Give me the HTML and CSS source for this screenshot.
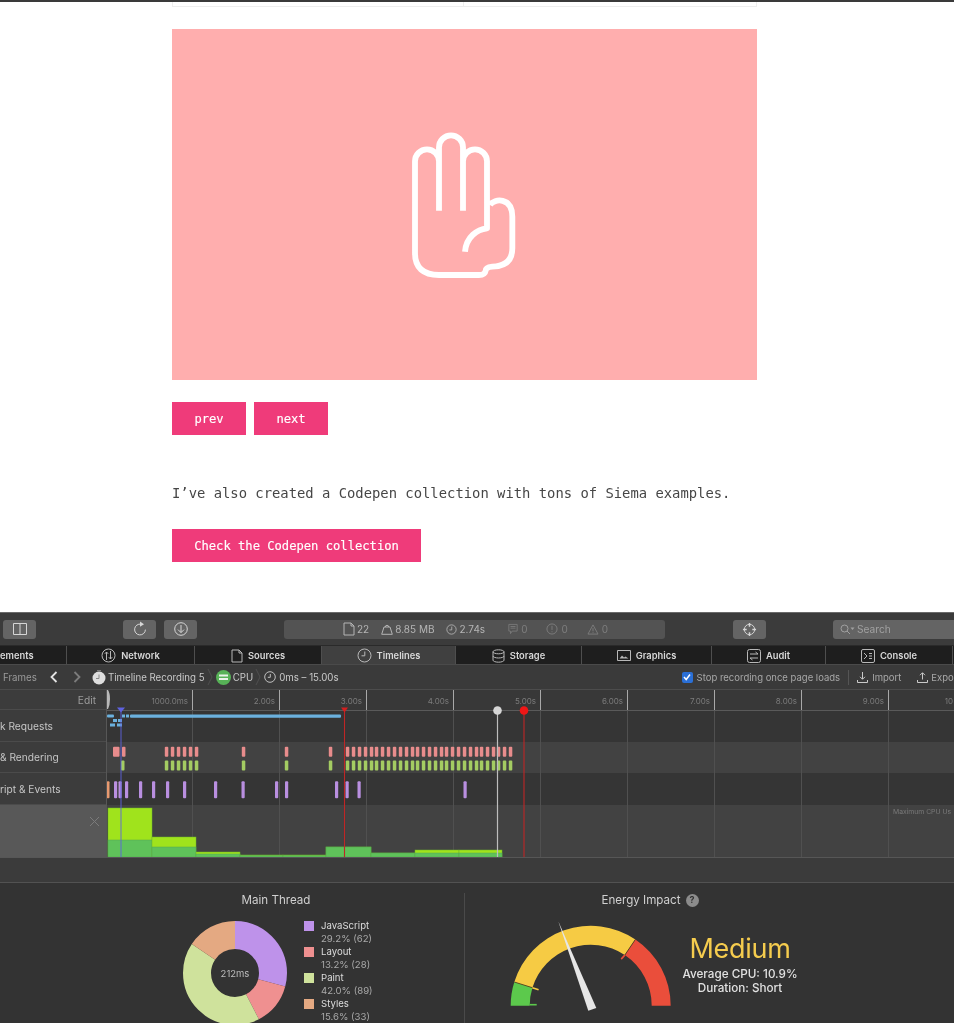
FILE: index.html
```html
<!DOCTYPE html>
<html lang="en">
<head>
<meta charset="utf-8">
<title>Siema</title>
<link rel="stylesheet" href="styles.css">
</head>
<body>
<div class="topline"></div>
<main class="article">
  <div class="table-stub"><span></span><span></span></div>
  <div class="slide">
    <svg class="hand" viewBox="0 0 450 510" width="150" height="170">
      <path d="M78 124a36 36 0 0 1 72 0V272M150 124V82a36 36 0 0 1 72 0V272M222 124a36 36 0 0 1 72 0V325C265 328 232 350 228 395M303 255C315 235 370 230 370 290V385Q370 438 310 440Q290 442 290 452Q288 465 270 465H150Q78 465 78 400V124"/>
    </svg>
  </div>
  <div class="pager">
    <a class="btn btn-small">prev</a>
    <a class="btn btn-small">next</a>
  </div>
  <p class="copy">I’ve also created a Codepen collection with tons of Siema examples.</p>
  <a class="btn btn-wide">Check the Codepen collection</a>
</main>

<section class="devtools">
  <div class="toolbar">
    <div class="tool tool-dock"><svg width="14" height="12" viewBox="0 0 14 12"><path class="ic" d="M.5.5h13v11H.5zM7 .5v11"/></svg></div>
    <div class="tool tool-reload"><svg width="16" height="16" viewBox="0 0 16 16"><path class="ic" d="M9 3.2A5.4 5.4 0 1 0 13.4 8.600"/><path class="ic-fill" d="M8 .6l4 2.6-4 2.600z"/></svg></div>
    <div class="tool tool-save"><svg width="16" height="16" viewBox="0 0 16 16"><circle class="ic" cx="8" cy="8" r="6.300"/><path class="ic" d="M8 4v7.500M5 8.600l3 3 3-3"/></svg></div>
    <div class="status">
      <span class="stat"><svg width="12" height="14" viewBox="0 0 12 14"><path class="ic" d="M1 1h7l3 3v9H1zM8 1v3h3"/></svg>22</span>
      <span class="stat"><svg width="12" height="12" viewBox="0 0 12 12"><path class="ic" d="M.7 11.300h10.600L9 4H3zM4.300 4a1.700 1.700 0 1 1 3.400 0"/></svg>8.85 MB</span>
      <span class="stat"><svg width="11" height="11" viewBox="0 0 13 13"><circle class="ic" cx="6.500" cy="6.500" r="5.500"/><path class="ic" d="M6.800 3v4H4"/></svg>2.74s</span>
      <span class="stat stat-dim stat-dim-first"><svg width="10" height="12" viewBox="0 0 12 13"><path class="ic" d="M1 1h10v8H5l-2 3V9H1zM3 3.500h6M3 5.500h6"/></svg>0</span>
      <span class="stat stat-dim"><svg width="12" height="12" viewBox="0 0 13 13"><circle class="ic" cx="6.500" cy="6.500" r="5.500"/><path class="ic" d="M6.500 3v4.500M6.500 9v1"/></svg>0</span>
      <span class="stat stat-dim"><svg width="12" height="11" viewBox="0 0 13 12"><path class="ic" d="M6.500 1L12 11H1zM6.500 4.500v3.500M6.500 9v1"/></svg>0</span>
    </div>
    <div class="tool tool-target"><svg width="15" height="15" viewBox="0 0 16 16"><circle class="ic" cx="8" cy="8" r="5.500"/><path class="ic-strong" d="M8 1v4M8 11v4M1 8h4M11 8h4"/></svg></div>
    <div class="search"><svg width="15" height="11" viewBox="0 0 15 11"><circle class="ic" cx="4.500" cy="4.500" r="3.500"/><path class="ic" d="M7 7l3 3"/><path class="ic-fill" d="M10.500 3.500h4l-2 2.500z"/></svg>Search</div>
  </div>

  <nav class="tabs">
    <div class="tab tab-first">ements</div>
    <div class="tab tab-net"><svg width="15" height="15" viewBox="0 0 15 15"><circle class="ic" cx="7.500" cy="7.500" r="6.500"/><path class="ic" d="M5.500 12V4M3.800 5.800l1.700-1.800 1.700 1.800M9.500 3v8M7.800 9.200l1.700 1.800 1.700-1.800"/></svg>Network</div>
    <div class="tab tab-src"><svg width="12" height="14" viewBox="0 0 12 14"><path class="ic" d="M1 1h7l3 3v9H1zM8 1v3h3"/></svg>Sources</div>
    <div class="tab tab-time tab-active"><svg width="15" height="15" viewBox="0 0 15 15"><circle class="ic" cx="7.500" cy="7.500" r="6.500"/><path class="ic" d="M7.800 3.500v4.300H4.500"/></svg>Timelines</div>
    <div class="tab tab-store"><svg width="13" height="14" viewBox="0 0 13 14"><ellipse class="ic" cx="6.500" cy="2.800" rx="5.500" ry="2"/><path class="ic" d="M1 2.800v8.400c0 1.100 2.500 2 5.500 2s5.500-.9 5.500-2V2.800M1 7c0 1.100 2.500 2 5.500 2S12 8.100 12 7"/></svg>Storage</div>
    <div class="tab tab-gfx"><svg width="14" height="11" viewBox="0 0 14 11"><path class="ic" d="M.5.500h13v10H.5z"/><path class="ic-fill" d="M2.500 8.500l2.500-3 2 2 1.500-1 3 2z"/></svg>Graphics</div>
    <div class="tab tab-audit"><svg width="14" height="14" viewBox="0 0 14 14"><rect class="ic" x=".5" y=".5" width="13" height="13" rx="2"/><path class="ic" d="M3 5h8M8.500 3l2.500 2M11 9H3M5.500 11L3 9"/></svg>Audit</div>
    <div class="tab tab-cons"><svg width="14" height="14" viewBox="0 0 14 14"><rect class="ic" x=".5" y=".5" width="13" height="13" rx="1.500"/><path class="ic" d="M3 4l3 3-3 3M8 4.500h3M8 7h3M8 9.500h3"/></svg>Console</div>
    <div class="tab tab-last"></div>
  </nav>

  <div class="navbar">
    <span class="nav-frames">Frames</span>
    <svg class="nav-back" width="8" height="12" viewBox="0 0 8 12"><path class="chev-on" d="M6.500 1L1.500 6l5 5"/></svg>
    <svg class="nav-fwd" width="8" height="12" viewBox="0 0 8 12"><path class="chev-off" d="M1.500 1l5 5-5 5"/></svg>
    <svg class="nav-watch" width="14" height="15" viewBox="0 0 14 15"><circle class="watch" cx="7" cy="8" r="6.500"/><path class="watch-hand" d="M7 4.500V8.500H4M5 .7h4"/></svg>
    <span class="crumb">Timeline Recording 5</span>
    <svg class="sep" width="6" height="18" viewBox="0 0 6 18"><path class="crumb-sep" d="M1 1l4 8-4 8"/></svg>
    <svg class="nav-cpu" width="15" height="15" viewBox="0 0 15 15"><circle class="cpu-dot" cx="7.500" cy="7.500" r="7.500"/><rect class="cpu-bar" x="3" y="4.500" width="9" height="2"/><rect class="cpu-bar" x="3" y="8" width="9" height="2"/></svg>
    <span class="crumb crumb-cpu">CPU</span>
    <svg class="sep" width="6" height="18" viewBox="0 0 6 18"><path class="crumb-sep" d="M1 1l4 8-4 8"/></svg>
    <svg class="nav-clock" width="12" height="12" viewBox="0 0 12 12"><circle class="ic" cx="6" cy="6" r="5.300"/><path class="ic" d="M6.300 3v3.300H3.800"/></svg>
    <span class="crumb crumb-range">0ms – 15.00s</span>
    <span class="check"><svg width="10" height="10" viewBox="0 0 10 10"><path class="tick" d="M2 5l2.200 2.500L8 2.500"/></svg></span>
    <span class="nav-opt">Stop recording once page loads</span>
    <span class="nav-div"></span>
    <svg class="nav-io" width="11" height="11" viewBox="0 0 11 11"><path class="ic" d="M5.500 0v7M3 4.800l2.500 2.500L8 4.800M.5 8v2.500h10V8"/></svg>
    <span class="nav-opt nav-import">Import</span>
    <svg class="nav-io nav-export-ic" width="11" height="11" viewBox="0 0 11 11"><path class="ic" d="M5.500 7.500V1M3 3.200L5.500.7 8 3.200M.5 8v2.500h10V8"/></svg>
    <span class="nav-opt nav-export">Expo</span>
  </div>

  <div class="timeline">
    <div class="labels">
      <div class="lab lab-edit">Edit</div>
      <div class="lab lab-r1">k Requests</div>
      <div class="lab lab-r2">&amp; Rendering</div>
      <div class="lab lab-r3">ript &amp; Events</div>
      <div class="lab lab-cpu"><svg width="11" height="11" viewBox="0 0 11 11"><path class="x" d="M1 1l9 9M10 1l-9 9"/></svg></div>
    </div>
    <svg class="chart" width="847" height="167" viewBox="107 690 847 167">
      <rect class="band-ruler" x="107" y="690" width="847" height="20"/>
      <rect class="band-a" x="107" y="710" width="847" height="32"/>
      <rect class="band-b" x="107" y="742" width="847" height="31"/>
      <rect class="band-a" x="107" y="773" width="847" height="32"/>
      <rect class="band-b" x="107" y="805" width="847" height="52"/>
      <g id="grid"></g>
      <line class="rule" x1="107" y1="710.500" x2="954" y2="710.500"/>
      <path class="grab" d="M106 690h2q2 3 2 9t-2 10h-2z"/>
      <g class="ruler-text">
        <text x="188" y="704">1000.0ms</text><text x="275" y="704">2.00s</text><text x="362" y="704">3.00s</text><text x="449" y="704">4.00s</text><text x="536" y="704">5.00s</text><text x="623" y="704">6.00s</text><text x="710" y="704">7.00s</text><text x="797" y="704">8.00s</text><text x="884" y="704">9.00s</text><text x="953" y="704">10</text>
      </g>
      <g class="net">
        <rect x="130" y="714.500" width="211" height="3.200" rx="1"/>
        <rect x="107" y="714.500" width="7" height="3" rx="1"/><rect x="122" y="714.500" width="3" height="3"/><rect x="126" y="714.500" width="3" height="3"/>
        <rect x="113" y="719" width="4" height="3"/><rect x="118" y="719" width="4" height="3"/>
        <rect x="110" y="723.500" width="5" height="3"/><rect x="117" y="723.500" width="5" height="3"/>
      </g>
      <g id="bars"></g>
      <g id="cpu"></g>
      <text class="max" x="893" y="814">Maximum CPU Us</text>
      <line class="pin-blue" x1="121" y1="711" x2="121" y2="857"/><path class="pin-blue-h" d="M117 707.500h8l-4 5z"/>
      <line class="pin-red" x1="344.500" y1="711" x2="344.500" y2="857"/><path class="pin-red-h" d="M341 707.500h7l-3.500 5z"/>
      <line class="pin-grey" x1="497.500" y1="711" x2="497.500" y2="857"/><circle class="pin-grey-h" cx="497.500" cy="710.500" r="4.300"/>
      <line class="pin-red" x1="524" y1="711" x2="524" y2="857"/><circle class="pin-red-c" cx="524" cy="710.500" r="4.300"/>
    </svg>
  </div>

  <div class="gap"></div>

  <div class="summary">
    <div class="panel panel-thread">
      <h3 class="panel-title">Main Thread</h3>
      <div class="thread-body">
        <svg class="donut" width="106" height="106" viewBox="0 0 106 106">
          <g transform="rotate(-90 53 53)">
            <circle class="seg seg-js" cx="53" cy="53" r="38" pathLength="100" stroke-dasharray="29.2 100" stroke-dashoffset="0"/>
            <circle class="seg seg-layout" cx="53" cy="53" r="38" pathLength="100" stroke-dasharray="13.2 100" stroke-dashoffset="-29.2"/>
            <circle class="seg seg-paint" cx="53" cy="53" r="38" pathLength="100" stroke-dasharray="42 100" stroke-dashoffset="-42.4"/>
            <circle class="seg seg-styles" cx="53" cy="53" r="38" pathLength="100" stroke-dasharray="15.6 100" stroke-dashoffset="-84.4"/>
          </g>
          <text class="donut-text" x="53" y="57">212ms</text>
        </svg>
        <ul class="legend">
          <li><i class="sw sw-js"></i><b>JavaScript</b><span>29.2% (62)</span></li>
          <li><i class="sw sw-layout"></i><b>Layout</b><span>13.2% (28)</span></li>
          <li><i class="sw sw-paint"></i><b>Paint</b><span>42.0% (89)</span></li>
          <li><i class="sw sw-styles"></i><b>Styles</b><span>15.6% (33)</span></li>
        </ul>
      </div>
    </div>
    <div class="panel panel-energy">
      <h3 class="panel-title panel-title-energy">Energy Impact <span class="help">?</span></h3>
      <div class="energy-body">
        <svg class="gauge" width="170" height="100" viewBox="0 0 170 100">
          <path class="g-green" d="M4.700 92.700A80 80 0 0 1 8.300 69L26.400 74.700A61 61 0 0 0 23.700 92.700z"/>
          <path class="g-yellow" d="M8.300 69A80 80 0 0 1 129.400 26.400L118.800 42.100A61 61 0 0 0 26.400 74.700z"/>
          <path class="g-red" d="M129.400 26.400A80 80 0 0 1 164.700 92.700H145.700A61 61 0 0 0 118.800 42.100z"/>
          <path class="g-edge" d="M8.300 69L26.400 74.700M129.400 26.400L118.800 42.100"/>
          <path class="lip lip-g" d="M23.700 91.700h7"/>
          <path class="lip lip-y" d="M26.400 74.700l6.200 2"/>
          <path class="lip lip-r" d="M118.800 42.100l-3.600 4"/>
          <polygon class="needle" points="52.300,8.300 82.300,97.700 90.300,95"/>
        </svg>
        <div class="verdict">
          <div class="verdict-big">Medium</div>
          <div class="verdict-line">Average CPU: 10.9%</div>
          <div class="verdict-line">Duration: Short</div>
        </div>
      </div>
    </div>
  </div>
</section>
<script src="chart.js"></script>
</body>
</html>
```

FILE: chart.js
```js
var NS = 'http://www.w3.org/2000/svg';
function rect(parent, cls, x, y, w, h, rx) {
  var r = document.createElementNS(NS, 'rect');
  r.setAttribute('class', cls);
  r.setAttribute('x', x); r.setAttribute('y', y);
  r.setAttribute('width', w); r.setAttribute('height', h);
  if (rx) r.setAttribute('rx', rx);
  parent.appendChild(r);
}
var grid = document.getElementById('grid');
[192.5, 279.5, 366.5, 453.5, 540.5, 627.5, 714.5, 801.5, 888.5].forEach(function (x) {
  rect(grid, 'tick-top', x - 0.5, 690, 1, 20);
  rect(grid, 'tick-line', x - 0.5, 710, 1, 147);
});
var bars = document.getElementById('bars');
var shared = [165,171,177,183,189,195,242,285,329,346,352,358,364,370,375,381,387,393,399,405,411,416,422,428,434,440,445,451,457,463,469,475,480,486,492,497,503,509];
rect(bars, 'b-layout', 113, 746.7, 6.5, 10, 1);
rect(bars, 'b-layout', 122, 746.7, 3.5, 10, 1);
rect(bars, 'b-paint', 121, 760.5, 3.5, 10, 1);
shared.forEach(function (x) {
  rect(bars, 'b-layout', x - 0.2, 746.7, 3.5, 10, 1);
  rect(bars, 'b-paint', x - 0.2, 760.5, 3.5, 10, 1);
});
rect(bars, 'b-style', 106.7, 781.3, 2.8, 17, 1);
[114,118.5,125,139,152,166,183,214,241.5,275,285,335,345.500,357.500,463.500].forEach(function (x) {
  rect(bars, 'b-js', x, 781.3, 3.2, 17, 1);
});
var cpu = document.getElementById('cpu');
[[108,44,808,840],[152,44,837,847],[196,44,852,854],[240,43,855,855.500],[283,43,855,855.500],[326,45,847,847],[371,44,853,853],[415,44,850,853],[459,43,850,853]].forEach(function (b) {
  rect(cpu, 'c-lime', b[0], b[2], b[1], 857 - b[2]);
  rect(cpu, 'c-green', b[0], b[3], b[1], 857 - b[3]);
});
```

FILE: styles.css
```css
* { box-sizing: border-box; }
html, body { margin: 0; padding: 0; height: 1023px; overflow: hidden; background: #fff; }
body { font-family: "Inter", "Liberation Sans", sans-serif; filter: blur(0.45px); }

.topline { height: 2px; background: #3a3a3a; }

.article { margin-left: 172px; width: 584.5px; font-family: "DejaVu Sans Mono", monospace; }
.table-stub { display: flex; height: 5px; border: 1px solid #eeeeee; border-top: 0; }
.table-stub span { width: 290px; }
.table-stub span + span { flex: 1; border-left: 1px solid #eeeeee; }
.slide { margin-top: 22px; height: 351px; background: #ffaeae; display: flex; align-items: center; justify-content: center; }
.hand { fill: none; stroke: #fff; stroke-width: 17.500; stroke-linejoin: round; }
.pager { display: flex; gap: 8px; margin-top: 22px; }
.btn { display: flex; align-items: center; justify-content: center; height: 33px; background: #ef3b7a; color: #fff; font-size: 12.15px; -webkit-text-stroke: 0.15px #fff; }
.btn-small { width: 74px; }
.btn-wide { width: 249px; }
.copy { margin: 48px 0 26px; font-size: 13.85px; line-height: 20px; color: #464646; white-space: nowrap; }

.devtools { margin-top: 50px; height: 411px; background: #333; color: #ddd; border-top: 1px solid #6a6a6a; font-size: 9.7px; overflow: hidden; }
.ic { fill: none; stroke: currentColor; stroke-width: 1; }
.ic-strong { fill: none; stroke: currentColor; stroke-width: 1.600; }
.ic-fill { fill: currentColor; }

.toolbar, .tabs, .navbar { display: flex; align-items: center; }
.toolbar > *, .navbar > *, .status > *, .stat > * { flex: none; }

.toolbar { height: 32px; background: #3b3b3b; padding-left: 3px; color: #d6d6d6; }
.tool { display: flex; align-items: center; justify-content: center; height: 19px; background: #646464; border-radius: 3px; }
.tool-dock { width: 33px; }
.tool-reload { width: 33px; margin-left: 87px; }
.tool-save { width: 33px; margin-left: 8px; }
.status { display: flex; align-items: center; width: 381px; height: 19px; margin-left: 87px; padding-left: 59px; background: #535353; border-radius: 3px; color: #b5b5b5; gap: 12px; font-size: 10px; }
.stat { display: inline-flex; align-items: center; gap: 2px; }
.stat-dim { color: #7d7d7d; margin-left: 7px; gap: 3px; }
.stat-dim-first { margin-left: 11px; }
.tool-target { width: 33px; margin-left: 68px; }
.search { display: flex; align-items: center; gap: 2px; width: 121px; height: 19px; margin-left: 67px; padding-left: 7px; background: #646464; border-radius: 3px 0 0 3px; color: #a0a0a0; font-size: 10.2px; }

.tabs { align-items: stretch; height: 20px; background: #1e1e1e; border-top: 1px solid #2a2a2a; border-bottom: 1px solid #4a4a4a; font-weight: 600; font-size: 9.35px; color: #d8d8d8; }
.tab { display: flex; align-items: center; justify-content: center; gap: 5px; padding-top: 1px; border-right: 1px solid #4e4e4e; flex: none; }
.tab svg { color: #b8b8b8; }
.tab-first { width: 67px; justify-content: flex-start; }
.tab-net { width: 128px; }
.tab-src { width: 127px; }
.tab-time { width: 134px; }
.tab-store { width: 126px; }
.tab-gfx { width: 130px; }
.tab-audit { width: 114px; }
.tab-cons { width: 127px; }
.tab-last { flex: 1; border-right: 0; }
.tab-active { background: #404040; }

.navbar { height: 25px; background: #3a3a3a; border-bottom: 1px solid #4c4c4c; padding-left: 3px; color: #c9c9c9; white-space: nowrap; }
.nav-frames { color: #9a9a9a; width: 34px; }
.nav-back { margin-left: 13px; }
.nav-fwd { margin-left: 15px; }
.nav-watch { margin-left: 11px; }
.chev-on, .chev-off { fill: none; stroke-width: 1.800; }
.chev-on { stroke: #e4e4e4; }
.chev-off { stroke: #7c7c7c; }
.watch { fill: #dedede; }
.watch-hand { fill: none; stroke: #8a8a8a; stroke-width: 1; }
.crumb { margin-left: 2px; }
.crumb-range { margin-left: 3px; }
.sep { margin-left: 2px; }
.crumb-sep { fill: none; stroke: #4f4f4f; }
.nav-cpu { margin-left: 3px; }
.cpu-dot { fill: #57b257; }
.cpu-bar { fill: #e8f2e8; }
.nav-clock { margin-left: 3px; color: #c0c0c0; }
.check { display: inline-flex; width: 11px; height: 11px; margin-left: 343px; background: #2a6fd6; border-radius: 2px; }
.tick { fill: none; stroke: #fff; stroke-width: 1.500; }
.nav-opt { color: #a8a8a8; margin-left: 4px; font-size: 9.5px; }
.nav-div { width: 1px; height: 15px; background: #555; margin-left: 8px; }
.nav-io { margin-left: 8px; color: #c9c9c9; }
.nav-import { margin-left: 4px; }
.nav-export-ic { margin-left: 16px; }
.nav-export { margin-left: 3px; }

.timeline { display: flex; height: 167px; }
.labels { width: 107px; flex: none; display: flex; flex-direction: column; background: #3c3c3c; border-right: 1px solid #575757; color: #c6c6c6; font-size: 10.2px; }
.lab { display: flex; align-items: center; border-bottom: 1px solid #4b4b4b; white-space: nowrap; }
.lab-edit { height: 20px; justify-content: flex-end; padding-right: 10px; color: #9c9c9c; }
.lab-r1 { height: 32px; }
.lab-r2 { height: 31px; }
.lab-r3 { height: 32px; }
.lab-cpu { height: 52px; background: #585858; justify-content: flex-end; align-items: flex-start; padding: 11px 6px 0 0; border-bottom: 0; }
.x { stroke: #7b7b7b; stroke-width: 1; fill: none; }
.chart { display: block; flex: none; }
.band-ruler { fill: #383838; }
.band-a { fill: #353535; }
.band-b { fill: #424242; }
.tick-top { fill: #a8a8a8; }
.tick-line { fill: #505050; }
.rule { stroke: #5a5a5a; stroke-width: 1; }
.grab { fill: #b8b8b8; }
.ruler-text text { fill: #7c7c7c; font-size: 8px; text-anchor: end; }
.net rect { fill: #6bb1de; }
.b-layout { fill: #e88c8c; }
.b-paint { fill: #a4cc62; }
.b-js { fill: #b98fe0; }
.b-style { fill: #e8996f; }
.c-lime { fill: #a0e31c; stroke: #6cb62a; stroke-width: .5; }
.c-green { fill: #5fc25a; stroke: #53a84f; stroke-width: .5; }
.max { fill: #7a7a7a; font-size: 6.800px; }
.pin-blue { stroke: #5f62e0; stroke-width: .9; }
.pin-blue-h { fill: #5f62e0; }
.pin-red { stroke: #bf2626; stroke-width: 1.100; }
.pin-red-h { fill: #d41f1f; }
.pin-grey { stroke: #bdbdbd; stroke-width: 1.200; }
.pin-grey-h { fill: #d6d6d6; }
.pin-red-c { fill: #f01616; }

.gap { height: 26px; background: #3b3b3b; border-top: 1px solid #565656; border-bottom: 1px solid #525252; }

.summary { display: flex; height: 140px; background: #333; }
.panel { flex: none; }
.panel-thread { width: 465px; border-right: 1px solid #4a4a4a; margin-top: 10px; }
.panel-energy { flex: 1; margin-top: 10px; }
.panel-title { margin: 0; font-size: 11.6px; font-weight: 400; color: #d0d0d0; line-height: 14px; text-align: center; }
.panel-thread .panel-title { padding-left: 88px; }
.panel-title-energy { width: 370px; display: flex; justify-content: center; align-items: center; gap: 5px; }
.help { display: inline-flex; width: 13px; height: 13px; align-items: center; justify-content: center; border-radius: 50%; background: #8c8c8c; color: #333; font-size: 9px; font-weight: 700; }

.thread-body { display: flex; margin-top: 13px; padding-left: 182px; align-items: flex-start; }
.donut { flex: none; }
.seg { fill: none; stroke-width: 28; }
.seg-js { stroke: #be92ea; }
.seg-layout { stroke: #ef9090; }
.seg-paint { stroke: #cfe29c; }
.seg-styles { stroke: #e4a982; }
.donut-text { fill: #bcbcbc; font-size: 9.500px; text-anchor: middle; }
.legend { list-style: none; margin: 0 0 0 16px; padding: 0; }
.legend li { display: grid; grid-template-columns: 10px auto; column-gap: 7px; height: 26px; line-height: 11px; font-size: 9.600px; }
.legend b { font-weight: 400; color: #dcdcdc; }
.legend span { grid-column: 2; color: #a9a9a9; }
.sw { width: 10px; height: 10px; margin-top: 1px; }
.sw-js { background: #be92ea; }
.sw-layout { background: #ef9090; }
.sw-paint { background: #cfe29c; }
.sw-styles { background: #e4a982; }

.energy-body { display: flex; align-items: flex-start; margin-top: 2px; padding-left: 41px; }
.gauge { flex: none; margin-top: 4px; overflow: visible; }
.g-green { fill: #5cc94c; }
.g-yellow { fill: #f6cb44; }
.g-red { fill: #ea4e3b; }
.g-edge { fill: none; stroke: #4a3a1c; stroke-width: .8; }
.lip { fill: none; stroke-width: 1.600; }
.lip-g { stroke: #5cc94c; }
.lip-y { stroke: #f6cb44; }
.lip-r { stroke: #ea4e3b; }
.needle { fill: #e6e6e6; }
.verdict { margin: 22px 0 0 6px; width: 116px; text-align: center; color: #e2e2e2; white-space: nowrap; }
.verdict-big { font-size: 27px; line-height: 36px; letter-spacing: -0.3px; color: #f5cc4e; font-weight: 400; }
.verdict-line { font-size: 11.700px; line-height: 14px; font-weight: 500; }
```
